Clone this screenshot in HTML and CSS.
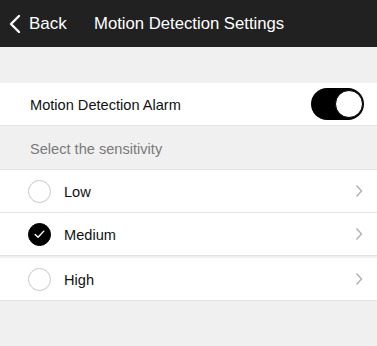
FILE: index.html
```html
<!DOCTYPE html>
<html>
<head>
<meta charset="utf-8">
<link rel="stylesheet" href="styles.css">
</head>
<body>
<div class="header">
  <div class="back">
    <svg class="back-icon" width="12" height="20" viewBox="0 0 12 20"><path d="M10 2 L2 10 L10 18" fill="none" stroke="#fff" stroke-width="2.4" stroke-linecap="round" stroke-linejoin="round"/></svg>
    <span>Back</span>
  </div>
  <div class="title">Motion Detection Settings</div>
</div>
<div class="spacer"></div>
<div class="row toggle-row">
  <span class="label">Motion Detection Alarm</span>
  <div class="toggle"><div class="knob"></div></div>
</div>
<div class="section">Select the sensitivity</div>
<div class="row option">
  <span class="radio"></span><span class="opt-label">Low</span>
  <svg class="chev" width="8" height="14" viewBox="0 0 8 14"><path d="M1.5 1.5 L6.5 7 L1.5 12.5" fill="none" stroke="#b0b0b0" stroke-width="1.4"/></svg>
</div>
<div class="row option gap-after">
  <span class="radio checked"><svg width="22" height="22" viewBox="0 0 22 22"><path d="M6.5 11.5 L9.5 14.5 L15.5 8" fill="none" stroke="#fff" stroke-width="1.5" stroke-linecap="round" stroke-linejoin="round"/></svg></span><span class="opt-label">Medium</span>
  <svg class="chev" width="8" height="14" viewBox="0 0 8 14"><path d="M1.5 1.5 L6.5 7 L1.5 12.5" fill="none" stroke="#b0b0b0" stroke-width="1.4"/></svg>
</div>
<div class="row option">
  <span class="radio"></span><span class="opt-label">High</span>
  <svg class="chev" width="8" height="14" viewBox="0 0 8 14"><path d="M1.5 1.5 L6.5 7 L1.5 12.5" fill="none" stroke="#b0b0b0" stroke-width="1.4"/></svg>
</div>
</body>
</html>
```
FILE: styles.css
```css
html, body {
  margin: 0;
  padding: 0;
  background: #f0f0f0;
  font-family: "Liberation Sans", Arial, sans-serif;
  height: 346px;
  overflow: hidden;
}
.header {
  height: 47px;
  background: #212121;
  color: #fff;
  display: flex;
  align-items: center;
  padding-top: 1px;
  box-sizing: border-box;
}
.back {
  display: flex;
  align-items: center;
  padding-left: 9px;
  font-size: 17px;
  width: 85px;
}
.back-icon {
  margin-right: 8px;
}
.title {
  font-size: 16.7px;
}
.spacer {
  height: 36px;
}
.row {
  background: #fff;
  border-bottom: 1px solid #e3e3e3;
  display: flex;
  align-items: center;
  box-sizing: border-box;
}
.toggle-row {
  height: 43px;
  padding: 0 13px 0 30px;
  justify-content: space-between;
}
.label {
  font-size: 14.6px;
  color: #111;
  padding-top: 2px;
}
.toggle {
  width: 53px;
  height: 32px;
  border-radius: 16px;
  background: #000;
  position: relative;
}
.knob {
  position: absolute;
  top: 2px;
  right: 1px;
  width: 26px;
  height: 26px;
  border-radius: 50%;
  background: #fff;
  border: 1px solid #000;
  box-sizing: content-box;
}
.section {
  height: 44px;
  border-bottom: 1px solid #e3e3e3;
  box-sizing: border-box;
  padding: 2px 0 0 30px;
  display: flex;
  align-items: center;
  font-size: 14.6px;
  color: #7a7a7a;
}
.option {
  height: 43px;
  padding: 0 14px 0 28px;
}
.gap-after {
  margin-bottom: 2px;
}
.radio {
  width: 21px;
  height: 21px;
  border-radius: 50%;
  border: 1px solid #c8c8c8;
  box-sizing: content-box;
  display: flex;
  align-items: center;
  justify-content: center;
}
.radio.checked {
  background: #000;
  border-color: #000;
}
.opt-label {
  font-size: 14.6px;
  color: #111;
  margin-left: 13px;
  padding-top: 2px;
  flex: 1;
}
```
